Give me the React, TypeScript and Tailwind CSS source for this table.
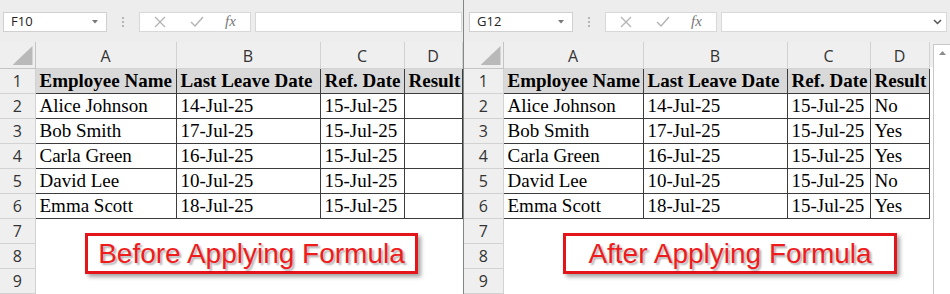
import React from "react";

type Row = [string, string, string, string];

const data: Row[] = [
  ["Alice Johnson", "14-Jul-25", "15-Jul-25", "No"],
  ["Bob Smith", "17-Jul-25", "15-Jul-25", "Yes"],
  ["Carla Green", "16-Jul-25", "15-Jul-25", "Yes"],
  ["David Lee", "10-Jul-25", "15-Jul-25", "No"],
  ["Emma Scott", "18-Jul-25", "15-Jul-25", "Yes"],
];

const headings = ["Employee Name", "Last Leave Date", "Ref. Date", "Result"];
const letters = ["A", "B", "C", "D"];

interface PaneProps {
  cellRef: string;
  padLeft: string;
  cols: number[];
  showResult: boolean;
  label: string;
  labelClass: string;
  isLast?: boolean;
}

const sans = { fontFamily: '"Open Sans", "Liberation Sans", sans-serif' };
const serif = { fontFamily: '"Liberation Serif", "Times New Roman", serif' };

// Name box, separator dots, cancel/enter/fx buttons and the formula input
function FormulaBar({ cellRef, padLeft, isLast }: { cellRef: string; padLeft: string; isLast?: boolean }) {
  return (
    <div className={`flex h-[23px] items-stretch ${padLeft} ${isLast ? "pr-[3px]" : "pr-[1px]"}`}>
      <div className="flex w-[104px] items-center justify-between border border-[#d0d0d0] bg-white pl-[7px] pr-[8px]">
        <span className="text-[13px] leading-none text-[#222]" style={sans}>
          {cellRef}
        </span>
        <svg width="6" height="4" viewBox="0 0 6 4">
          <path d="M0 0 L6 0 L3 3.5 Z" fill="#777" />
        </svg>
      </div>
      <div className="flex w-[32px] flex-col items-center justify-center gap-[2px]">
        <span className="h-[2px] w-[2px] bg-[#b5b5b5]" />
        <span className="h-[2px] w-[2px] bg-[#b5b5b5]" />
        <span className="h-[2px] w-[2px] bg-[#b5b5b5]" />
      </div>
      <div className="flex w-[112px] items-center border border-[#d8d8d8] bg-white">
        <svg className="ml-[14px]" width="12" height="12" viewBox="0 0 12 12">
          <path d="M1 1 L11 11 M11 1 L1 11" stroke="#b3b3b3" strokeWidth="1.3" fill="none" />
        </svg>
        <svg className="ml-[24px]" width="14" height="11" viewBox="0 0 14 11">
          <path d="M1 6 L5 10 L13 1" stroke="#b3b3b3" strokeWidth="1.4" fill="none" />
        </svg>
        <span className="ml-[21px] text-[15px] leading-none italic text-[#777]" style={serif}>
          fx
        </span>
      </div>
      <div className="ml-[4px] flex flex-1 items-center justify-end border border-[#d8d8d8] bg-white pr-[4px]">
        {isLast && (
          <svg width="9" height="6" viewBox="0 0 9 6">
            <path d="M1 1 L4.5 4.5 L8 1" stroke="#555" strokeWidth="1.5" fill="none" />
          </svg>
        )}
      </div>
    </div>
  );
}

const rowHead =
  "border-r border-b border-[#d2d2d2] bg-[#efefef] p-0 text-center text-[16px] leading-[22px] text-[#333]";
const cell =
  "overflow-hidden whitespace-nowrap border border-[#3c3c3c] py-0 pl-[4px] pr-0 text-[19px] leading-[22px] text-black";

function Pane({ cellRef, padLeft, cols, showResult, label, labelClass, isLast }: PaneProps) {
  const tableWidth = cols.reduce((a, b) => a + b, 0);

  return (
    <div className={`relative flex flex-col bg-[#ededed] pt-[12px] ${isLast ? "flex-1" : "w-[463px]"}`}>
      <FormulaBar cellRef={cellRef} padLeft={padLeft} isLast={isLast} />

      <div className="mt-[10px] flex flex-1">
        <table className="table-fixed border-collapse self-start bg-white" style={{ width: tableWidth }}>
          <colgroup>
            {cols.map((w, i) => (
              <col key={i} style={{ width: w }} />
            ))}
          </colgroup>
          <tbody>
            <tr className="h-[27px]">
              <td className="relative border-r border-b border-[#c4c4c4] bg-[#efefef] p-0">
                <div
                  className="absolute right-[2px] bottom-[3px] h-[19px] w-[20px] bg-[#b9b9b9]"
                  style={{ clipPath: "polygon(100% 0, 100% 100%, 0 100%)" }}
                />
              </td>
              {letters.map((l) => (
                <td key={l} className={`${rowHead} pt-[2px]`} style={sans}>
                  {l}
                </td>
              ))}
            </tr>

            <tr className="h-[25px]">
              <td className={rowHead} style={sans}>
                1
              </td>
              {headings.map((h) => (
                <td key={h} className={`${cell} bg-[#d9d9d9] font-bold`} style={serif}>
                  {h}
                </td>
              ))}
            </tr>

            {data.map((r, i) => (
              <tr key={r[0]} className="h-[25px]">
                <td className={rowHead} style={sans}>
                  {i + 2}
                </td>
                {r.map((v, j) => (
                  <td key={j} className={cell} style={serif}>
                    {j === 3 && !showResult ? "" : v}
                  </td>
                ))}
              </tr>
            ))}

            {[7, 8, 9].map((n) => (
              <tr key={n} className="h-[25px]">
                <td className={rowHead} style={sans}>
                  {n}
                </td>
                <td colSpan={4} className="p-0" />
              </tr>
            ))}
          </tbody>
        </table>

        {isLast && (
          <>
            <div className="flex flex-1 flex-col bg-white">
              <div className="h-[25px] bg-[#efefef]" />
            </div>
            <div className="mt-[2px] flex w-[17px] flex-col border-l border-t border-[#c8c8c8] bg-white">
              <div className="flex h-[16px] items-center justify-center">
                <svg width="7" height="4" viewBox="0 0 7 4">
                  <path d="M0 4 L3.5 0 L7 4 Z" fill="#8c8c8c" />
                </svg>
              </div>
            </div>
          </>
        )}
      </div>

      {/* text box shape floating over rows 7-9 */}
      <div
        className={`absolute top-[233px] flex h-[41px] items-center justify-center border-[3px] border-[#e4141b] bg-white shadow-[3px_3px_4px_rgba(0,0,0,0.35)] ${labelClass}`}
      >
        <span
          className="text-[28px] leading-none text-[#ee1c1c]"
          style={{ fontFamily: '"Liberation Sans", Arial, sans-serif', textShadow: "2px 2px 2px rgba(0,0,0,0.3)" }}
        >
          {label}
        </span>
      </div>
    </div>
  );
}

export default function App() {
  return (
    <div className="flex h-[294px] w-[950px] overflow-hidden bg-[#ededed]">
      <Pane
        cellRef="F10"
        padLeft="pl-[3px]"
        cols={[35, 141, 144, 84, 58]}
        showResult={false}
        label="Before Applying Formula"
        labelClass="left-[85px] w-[333px]"
      />
      <div className="w-px bg-[#7c8a84]" />
      <Pane
        cellRef="G12"
        padLeft="pl-[5px]"
        cols={[39, 140, 144, 83, 59]}
        showResult
        label="After Applying Formula"
        labelClass="left-[99px] w-[334px]"
        isLast
      />
    </div>
  );
}
